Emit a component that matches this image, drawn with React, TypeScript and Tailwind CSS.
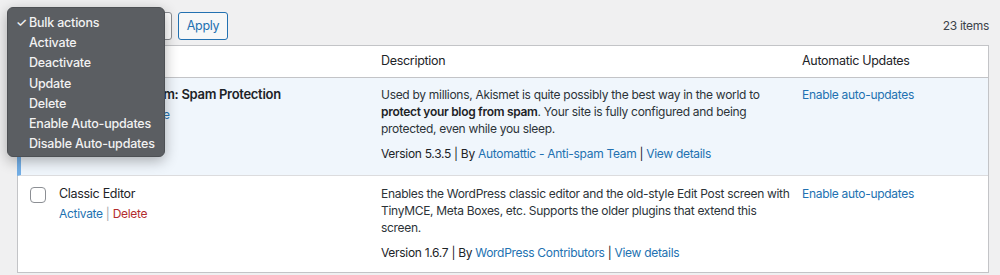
import React from 'react';

const bulkActions = ['Bulk actions', 'Activate', 'Deactivate', 'Update', 'Delete', 'Enable Auto-updates', 'Disable Auto-updates'];

function Sep() {
    return <span className="text-[#a7aaad]"> | </span>;
}

function VersionLine({ version, author }: { version: string; author: string }) {
    return (
        <p className="mt-[8px] whitespace-nowrap leading-[17px] text-[#1d2327]">
            Version {version} | By <a className="text-[#2271b1]">{author}</a> | <a className="text-[#2271b1]">View details</a>
        </p>
    );
}

function App() {
    return (
        <div className="relative h-[275px] w-[1000px] overflow-hidden bg-[#f0f0f1] font-[Inter,sans-serif] text-[12px] tracking-[-0.3px] text-[#2c3338]">
            <div className="flex items-center pl-[18px] pr-[11px] pt-[12px]">
                <div className="h-[28px] w-[154px] rounded-[3px] border border-[#8c8f94] bg-white" />
                <button className="ml-[6px] flex h-[28px] w-[50px] items-center justify-center rounded-[3px] border border-[#2271b1] bg-[#f6f7f7] text-[12.5px] text-[#2271b1]">
                    Apply
                </button>
                <span className="ml-auto text-[#3c434a]">23 items</span>
            </div>

            <div className="ml-[17px] mt-[5px] w-[972px] border-b border-r border-t border-[#c3c4c7]">
                {/* header */}
                <div className="flex h-[32px] items-center border-b border-l border-[#c3c4c7] bg-white text-[12.5px] text-[#1d2327]">
                    <div className="w-[41px]" />
                    <div className="w-[322px]" />
                    <div className="w-[421px]">Description</div>
                    <div className="flex-1">Automatic Updates</div>
                </div>

                {/* active row */}
                <div className="flex h-[98px] border-b border-b-[#dcdcde] border-l-4 border-l-[#72aee6] bg-[#f0f6fc] pt-[8px]">
                    <div className="w-[38px] pl-[9px]">
                        <div className="mt-[1px] h-[16px] w-[16px] rounded-[4px] border border-[#8c8f94] bg-white" />
                    </div>
                    <div className="w-[322px] leading-[17px]">
                        <p className="text-[13px] font-semibold text-[#1d2327]">Akismet Anti-spam: Spam Protection</p>
                        <p className="mt-[3px]">
                            <a className="text-[#2271b1]">Settings</a>
                            <Sep />
                            <a className="text-[#2271b1]">Deactivate</a>
                        </p>
                    </div>
                    <div className="w-[421px] pr-[10px]">
                        <p className="whitespace-nowrap leading-[17px] text-[#2c3338]">
                            <span className="block">Used by millions, Akismet is quite possibly the best way in the world to</span>
                            <span className="block">
                                <strong className="font-semibold text-[#1d2327]">protect your blog from spam</strong>. Your site is fully configured and being
                            </span>
                            <span className="block">protected, even while you sleep.</span>
                        </p>
                        <VersionLine version="5.3.5" author="Automattic - Anti-spam Team" />
                    </div>
                    <div className="flex-1 leading-[17px] text-[#2271b1]">Enable auto-updates</div>
                </div>

                {/* inactive row */}
                <div className="flex h-[96px] border-l border-[#c3c4c7] bg-white pt-[9px]">
                    <div className="w-[41px] pl-[12px]">
                        <div className="mt-[2px] h-[16px] w-[16px] rounded-[4px] border border-[#8c8f94] bg-white" />
                    </div>
                    <div className="w-[322px] leading-[17px]">
                        <p className="text-[12.5px] text-[#1d2327]">Classic Editor</p>
                        <p className="mt-[3px]">
                            <a className="text-[#2271b1]">Activate</a>
                            <Sep />
                            <a className="text-[#b32d2e]">Delete</a>
                        </p>
                    </div>
                    <div className="w-[421px] pr-[10px]">
                        <p className="whitespace-nowrap leading-[17px] text-[#2c3338]">
                            <span className="block">Enables the WordPress classic editor and the old-style Edit Post screen with</span>
                            <span className="block">TinyMCE, Meta Boxes, etc. Supports the older plugins that extend this</span>
                            <span className="block">screen.</span>
                        </p>
                        <VersionLine version="1.6.7" author="WordPress Contributors" />
                    </div>
                    <div className="flex-1 leading-[17px] text-[#2271b1]">Enable auto-updates</div>
                </div>
            </div>

            {/* open select menu */}
            <div className="absolute left-[7px] top-[7px] h-[150px] w-[158px] rounded-[6px] border border-[#4d5054] bg-[#5b5e62] pt-[5px] text-[12.5px] tracking-[-0.2px] shadow-[0_4px_14px_rgba(0,0,0,0.3)]">
                {bulkActions.map((label, i) => (
                    <div key={label} className="relative h-[20.2px] pl-[21px] font-medium leading-[20px] text-[#f2f2f2]">
                        {i === 0 && <span className="absolute left-[8px] top-0">✓</span>}
                        {label}
                    </div>
                ))}
            </div>
        </div>
    );
}

export default App;
